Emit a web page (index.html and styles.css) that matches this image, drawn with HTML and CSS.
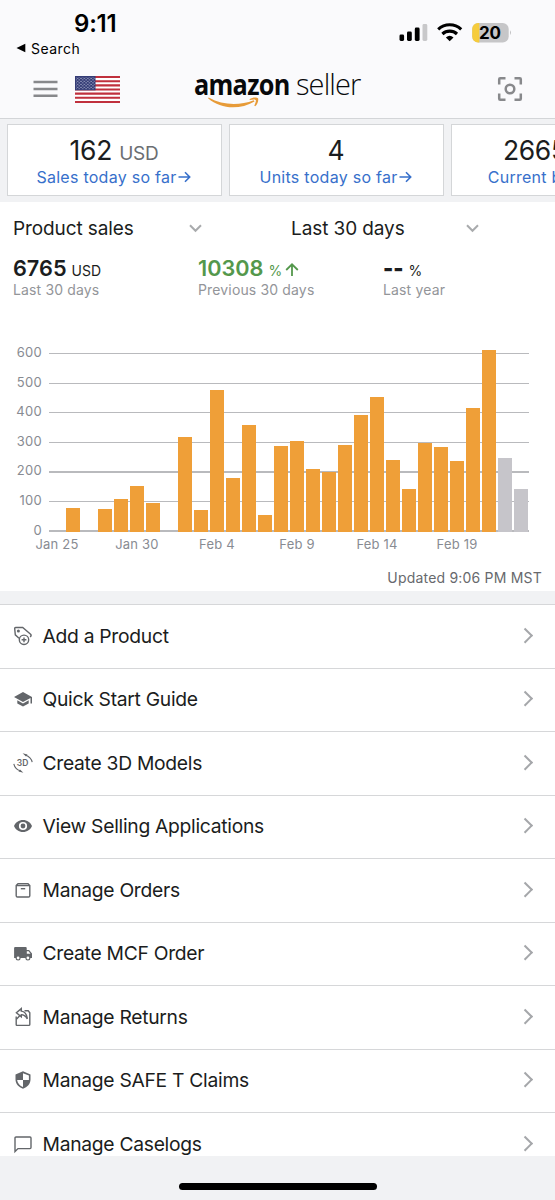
FILE: index.html
```html
<!DOCTYPE html>
<html lang="en">
<head>
<meta charset="utf-8">
<title>Amazon Seller</title>
<link rel="stylesheet" href="styles.css">
</head>
<body>
<div class="app">
  <header class="top">
    <div class="status">
      <div class="clock">9:11</div>
      <div class="signals">
        <svg width="116" height="22" viewBox="0 0 116 22">
          <rect x="0.5" y="13.5" width="4.6" height="6.5" rx="1.4"/>
          <rect x="8" y="10.5" width="4.8" height="9.5" rx="1.4"/>
          <rect x="15.8" y="6.5" width="4.8" height="13.5" rx="1.4"/>
          <rect x="23.5" y="3" width="4.8" height="17" rx="1.4" fill="#c8c8ca"/>
          <g fill="none" stroke="#000" stroke-width="3.1">
            <path d="M39.2 8.3a17 17 0 0 1 23 0"/>
            <path d="M43.4 13a10.8 10.8 0 0 1 14.6 0"/>
          </g>
          <path d="M46.9 16.4a5.8 5.8 0 0 1 7.6 0L50.7 20.2z"/>
          <clipPath id="cell"><rect x="73.2" y="2" width="36.5" height="19.4" rx="6"/></clipPath>
          <g clip-path="url(#cell)"><rect x="73" y="2" width="37" height="20" fill="#c6c6c8"/><rect x="73" y="2" width="7.3" height="20" fill="#f6cc3c"/></g>
          <path d="M111 9.2q2 2.3 0 4.8z" fill="#c0c0c2"/>
          <text class="charge" x="91" y="17.8" text-anchor="middle">20</text>
        </svg>
      </div>
    </div>
    <div class="back"><svg width="10" height="10" viewBox="0 0 10 10"><path d="M.5 5L9.3.8v8.4z"/></svg><span>Search</span></div>
    <nav class="bar">
      <svg class="burger" width="25" height="18" viewBox="0 0 25 18"><path d="M.5 2h24M.5 8.9h24M.5 15.7h24" stroke="#87888b" stroke-width="2.5"/></svg>
      <svg class="flag" width="45" height="27" viewBox="0 0 45 27">
        <defs><pattern id="stars" width="3.4" height="3" patternUnits="userSpaceOnUse"><circle cx=".9" cy=".8" r=".6" fill="#c7cbe0"/><circle cx="2.6" cy="2.3" r=".6" fill="#c7cbe0"/></pattern></defs>
        <rect width="45" height="27" fill="#fff"/>
        <path d="M0 1.04h45M0 5.19h45M0 9.35h45M0 13.5h45M0 17.65h45M0 21.8h45M0 25.96h45" stroke="#c0303d" stroke-width="2.08"/>
        <rect width="20.5" height="14.3" fill="#343c76"/>
        <rect x="1" y="1" width="18.7" height="12.5" fill="url(#stars)"/>
      </svg>
      <div class="logo">
        <span class="brand">amazon</span><span class="sub">seller</span>
        <svg class="smile" width="54" height="14" viewBox="0 0 54 14"><g fill="#e79b39"><path d="M1 2.3C14 13.5 33 14 47.5 5.4L46.8 4.3C32 10 16 9.5 1.7 1.6Z"/><path d="M42.5 3.2C45.5 1 50 1.2 51 2.3C51.8 4 50.6 8.2 48.2 10.2L47.3 9.7C48.3 7.3 49.3 5 48.7 4C47.8 3.1 45 3.6 42.8 3.9Z"/></g></svg>
      </div>
      <svg class="scan" width="26" height="26" viewBox="0 0 26 26" fill="none" stroke="#88898c" stroke-width="2.5"><path d="M2.2 8.5V3.2q0-1 1-1H8.5M17.5 2.2h5.3q1 0 1 1V8.5M23.8 17.5v5.3q0 1-1 1H17.5M8.5 23.8H3.2q-1 0-1-1V17.5"/><circle cx="13" cy="13" r="4.3"/></svg>
    </nav>
  </header>

  <section class="cards">
    <article class="card"><p class="figure">162 <small>USD</small></p><p class="link">Sales today so far<svg class="go" width="13" height="12" viewBox="0 0 13 12"><path d="M.5 6h11M7 1.2L11.7 6 7 10.8"/></svg></p></article>
    <article class="card"><p class="figure">4</p><p class="link">Units today so far<svg class="go" width="13" height="12" viewBox="0 0 13 12"><path d="M.5 6h11M7 1.2L11.7 6 7 10.8"/></svg></p></article>
    <article class="card"><p class="figure">2665 <small>USD</small></p><p class="link">Current balance<svg class="go" width="13" height="12" viewBox="0 0 13 12"><path d="M.5 6h11M7 1.2L11.7 6 7 10.8"/></svg></p></article>
  </section>

  <section class="sales">
    <div class="filters">
      <div class="filter"><span>Product sales</span><svg width="13" height="9" viewBox="0 0 13 9"><path d="M1 1.2l5.5 5.6L12 1.2"/></svg></div>
      <div class="filter"><span>Last 30 days</span><svg width="13" height="9" viewBox="0 0 13 9"><path d="M1 1.2l5.5 5.6L12 1.2"/></svg></div>
    </div>
    <div class="totals">
      <div><p class="total">6765 <small>USD</small></p><p class="period">Last 30 days</p></div>
      <div><p class="total up">10308 <small>%</small><svg width="14" height="14" viewBox="0 0 14 14"><path d="M7 13V1.5M1.2 7L7 1.3 12.8 7"/></svg></p><p class="period">Previous 30 days</p></div>
      <div><p class="total none"><b>--</b> <small>%</small></p><p class="period">Last year</p></div>
    </div>
    <div class="chart">
      <div class="scale"><span>600</span><span>500</span><span>400</span><span>300</span><span>200</span><span>100</span><span>0</span></div>
      <div class="plot" id="plot"></div>
    </div>
    <div class="dates"><span>Jan 25</span><span>Jan 30</span><span>Feb 4</span><span>Feb 9</span><span>Feb 14</span><span>Feb 19</span></div>
    <p class="updated">Updated 9:06 PM MST</p>
  </section>

  <ul class="menu">
    <li><svg class="icon" viewBox="0 0 20 20"><path class="line" d="M6 12.2L2.3 8.8 1.7 2.6Q1.7 1.5 2.7 1.5L9.7 1.5 17.6 8.2Q18.8 9.4 17.2 11"/><circle cx="5.4" cy="5" r="1.5"/><circle class="line" cx="11" cy="13.8" r="4.7"/><path class="line" d="M11 11.4v4.8M8.6 13.8h4.8"/></svg><span>Add a Product</span></li>
    <li><svg class="icon" viewBox="0 0 20 20"><path d="M1 8L10 3l9 5v6.5h-1.5V9L10 13z"/><path d="M4.3 11.2L10 14.4l5.7-3.2v3.2L10 17.6l-5.7-3.2z"/></svg><span>Quick Start Guide</span></li>
    <li><svg class="icon" viewBox="0 0 20 20"><text class="three" x="9.6" y="13" text-anchor="middle">3D</text><path class="line arc" d="M12.5 2Q18 4 19.2 9.2M7.5 18Q2 16 .8 10.8"/><path d="M9.6.3L14.5 1.5 13 3.4zM10.4 19.7L5.5 18.5 7 16.6z"/></svg><span>Create 3D Models</span></li>
    <li><svg class="icon" viewBox="0 0 20 20"><path fill-rule="evenodd" d="M10 4C5.9 4 2.4 6.5 1 10c1.4 3.5 4.9 6 9 6s7.6-2.5 9-6c-1.4-3.5-4.9-6-9-6zm0 10.1a4.1 4.1 0 1 1 0-8.2 4.1 4.1 0 0 1 0 8.2z"/><circle cx="10" cy="10" r="2.4"/></svg><span>View Selling Applications</span></li>
    <li><svg class="icon" viewBox="0 0 20 20"><path class="line" d="M3.2 5.5L5 3.6h10l1.8 1.9v10.2q0 1.3-1.3 1.3h-11q-1.3 0-1.3-1.3zM3.5 5.5h13"/><path class="line" d="M7.8 8.7h4.4"/></svg><span>Manage Orders</span></li>
    <li><svg class="icon" viewBox="0 0 20 20"><path fill-rule="evenodd" d="M2.2 4h10.5q1 0 1 1v2h2.4L19 10.6V15h-1.6a2.5 2.5 0 0 1-5 0H7.6a2.5 2.5 0 0 1-5 0H1.1V5.1Q1.1 4 2.2 4zM13.8 8.2v2.5h3.7l-1.9-2.5z"/><circle cx="5.1" cy="15" r="1.4" fill="#fff"/><circle cx="14.9" cy="15" r="1.4" fill="#fff"/></svg><span>Create MCF Order</span></li>
    <li><svg class="icon" viewBox="0 0 20 20"><path class="line" d="M11.5 3.8h3.7l1.6 2v11.6q0 1-1 1H4.2q-1 0-1-1V9.5"/><path class="line" d="M8.3 1.6L3.4 5.8l4.9 4V7.6q3.6 0 6 4.2Q13.5 4.6 8.3 4.1zM3.4 12.2L6.5 9"/></svg><span>Manage Returns</span></li>
    <li><svg class="icon" viewBox="0 0 20 20"><path fill-rule="evenodd" d="M10 1.3l7.5 3.2v5.1c0 4.3-3.2 8-7.5 9.1-4.3-1.1-7.5-4.8-7.5-9.1V4.5zM10 3.2v6.9h5.9V5.6zM10 10.1H4.1c.4 3.2 2.8 6 5.9 6.9z"/></svg><span>Manage SAFE T Claims</span></li>
    <li><svg class="icon" viewBox="0 0 20 20"><path class="line" d="M2 17.5V4q0-1 1-1h14q1 0 1 1v9.6q0 1-1 1H5z"/></svg><span>Manage Caselogs</span></li>
  </ul>
  <footer class="home"><i></i></footer>
</div>
<script src="chart.js"></script>
</body>
</html>
```
FILE: styles.css
```css
* { box-sizing: border-box; margin: 0; padding: 0; }
body { width: 555px; height: 1200px; overflow: hidden; font-family: Inter, "Liberation Sans", sans-serif; color: #1b1d20; background: #fff; }
svg { display: block; flex: none; }
p { white-space: nowrap; }
.app { height: 1200px; display: flex; flex-direction: column; overflow: hidden; }

.top { height: 119px; flex: none; background: #fafafc; border-bottom: 1px solid #d3d5d8; }
.status { height: 38px; display: flex; justify-content: space-between; padding: 9px 40px 0 74px; }
.clock { font-size: 24px; line-height: 29px; font-weight: 600; letter-spacing: -0.2px; color: #000; }
.signals { padding-top: 12px; }
.charge { font: 700 17px Inter, sans-serif; }
.back { height: 20px; display: flex; align-items: center; gap: 5px; padding-left: 16px; font-size: 14px; font-weight: 400; color: #000; letter-spacing: 0.45px; }
.bar { display: flex; align-items: flex-start; padding: 12px 32px 0 33px; }
.burger { margin-top: 10px; }
.flag { margin: 6px 0 0 17px; }
.logo { position: relative; display: flex; width: 168px; margin-left: 74px; height: 40px; line-height: 28px; font-family: "Open Sans", sans-serif; color: #08090b; }
.brand { width: 102px; font-size: 29px; font-weight: 700; letter-spacing: -0.8px; transform: scaleX(0.87); transform-origin: left; }
.sub { font-size: 29px; font-weight: 300; letter-spacing: -0.9px; }
.smile { position: absolute; left: 13px; top: 26px; }
.scan { margin: 6px 0 0 auto; }

.cards { height: 83px; flex: none; display: flex; gap: 7px; padding: 5px 0 0 6.5px; background: #f1f2f4; overflow: hidden; }
.card { width: 215px; height: 72px; flex: none; background: #fff; border: 1.5px solid #d4d6d8; text-align: center; padding-top: 8px; }
.figure { height: 34px; font-size: 26.5px; line-height: 34px; letter-spacing: -0.3px; }
.figure small { font-size: 19px; line-height: 1; color: #6b6e72; }
.link { display: flex; justify-content: center; align-items: center; gap: 1px; font-size: 16px; line-height: 20px; color: #3770cb; letter-spacing: 0.27px; margin-left: -1px; }
.go { fill: none; stroke: #3770cb; stroke-width: 1.6; }

.sales { height: 389px; flex: none; padding-top: 13px; }
.filters { display: grid; grid-template-columns: 278px 277px; height: 26px; }
.filter { display: flex; justify-content: space-between; align-items: center; padding: 0 76px 0 13px; font-size: 19px; letter-spacing: -0.1px; }
.filter svg { fill: none; stroke: #a9abad; stroke-width: 2; }
.totals { display: grid; grid-template-columns: 185px 185px 1fr; padding: 13px 0 0 13px; }
.total { display: flex; align-items: baseline; gap: 5px; height: 28px; font-size: 21.7px; line-height: 28px; font-weight: 600; }
.total small { font-size: 14px; font-weight: 400; }
.total svg { margin-left: -2px; fill: none; stroke: #54984c; stroke-width: 1.8; position: relative; top: 1px; }
.up { color: #54984c; }
.period { font-size: 14px; line-height: 16px; color: #939599; letter-spacing: 0.15px; }
.chart { display: flex; gap: 7px; height: 178.5px; margin-top: 55px; }
.scale { width: 42px; display: flex; flex-direction: column; text-align: right; font-size: 13px; line-height: 29.6px; color: #888b92; margin-top: -15px; letter-spacing: 0.3px; }
.plot { width: 480px; height: 178.5px; display: grid; grid-template-columns: repeat(30, 16px); grid-template-rows: 178.5px; align-items: end; justify-items: center; background: repeating-linear-gradient(to bottom, #b9babd 0, #b9babd 1.3px, transparent 1.3px, transparent 29.55px); }
.bar-day { width: 13.6px; background: #ef9f38; }
.bar-day.pending { background: #c6c5ca; }
.dates { display: grid; grid-template-columns: repeat(6, 80px); margin-left: 17px; text-align: center; font-size: 13px; line-height: 18px; color: #888b92; padding-top: 3.5px; letter-spacing: 0.2px; }
.updated { text-align: right; padding: 14.5px 13px 0 0; font-size: 14px; line-height: 20px; color: #67696d; letter-spacing: 0.2px; }

.menu { list-style: none; height: 565px; flex: none; overflow: hidden; border-top: 13px solid #f1f2f4; }
.menu li { height: 63.5px; display: flex; align-items: center; gap: 9.5px; padding: 0 24.5px 1px 13px; border-top: 1.5px solid #d6d7d9; font-size: 19.3px; letter-spacing: -0.29px; }
.menu li::after { content: ""; width: 8.5px; height: 8.5px; margin: 0 0 2px auto; border: solid #a5a7aa; border-width: 2px 2px 0 0; transform: rotate(45deg); }
.icon { width: 20px; height: 20px; fill: #63666a; }
.line { fill: none; stroke: #63666a; stroke-width: 1.4; }
.arc { stroke-width: 1.1; }
.three { font: 600 8.5px Inter, sans-serif; letter-spacing: 0; }
.home { flex: 1; display: flex; justify-content: center; align-items: flex-start; padding-top: 27px; background: #f1f2f4; }
.home i { width: 198px; height: 6.5px; border-radius: 4px; background: #000; }
```
FILE: chart.js
```js
const sales = [0, 78, 0, 75, 109, 153, 97, 0, 317, 74, 477, 180, 358, 57, 289, 305, 212, 200, 292, 391, 452, 242, 143, 299, 283, 238, 417, 612, 246, 143];
const plot = document.getElementById("plot");
sales.forEach((value, day) => {
  const bar = document.createElement("div");
  bar.className = day > 27 ? "bar-day pending" : "bar-day";
  bar.style.height = value * 0.297 + "px";
  bar.style.gridColumn = day + 1;
  bar.style.gridRow = 1;
  plot.append(bar);
});
```
